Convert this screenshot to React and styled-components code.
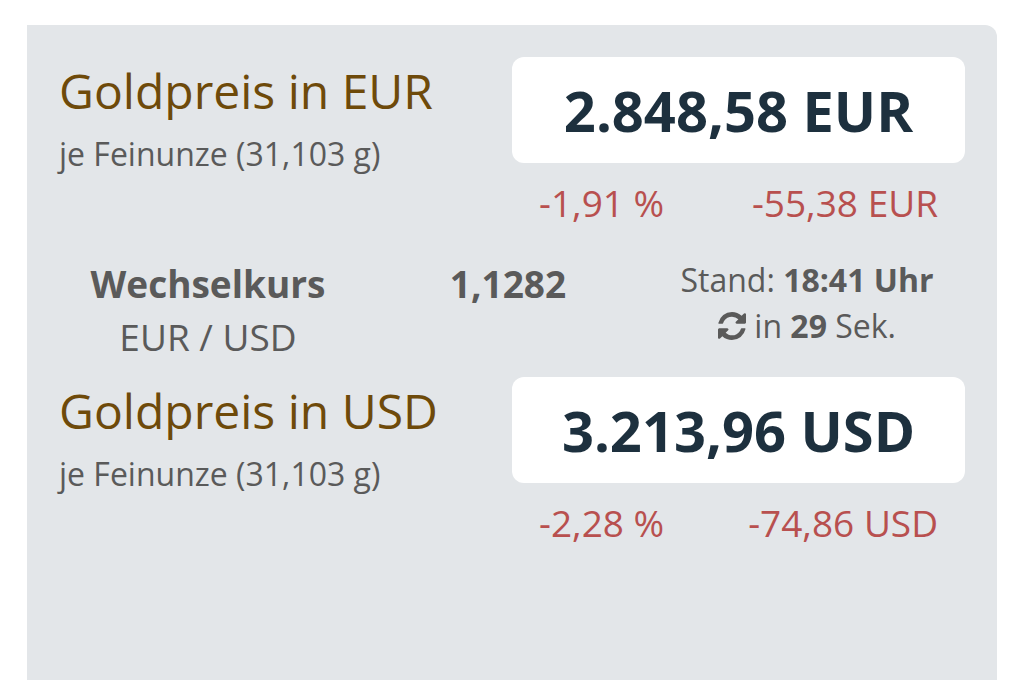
import React from "react";
import styled, { createGlobalStyle } from "styled-components";

const GlobalStyle = createGlobalStyle`
  * { box-sizing: border-box; }
  body {
    margin: 0;
    background: #fff;
    color: #5a5a5a;
    font-family: "Open Sans", "Noto Sans", sans-serif;
  }
`;

const Page = styled.main`
  padding: 25px 27px 0;
`;

const Panel = styled.section`
  min-height: calc(100vh - 25px);
  padding: 32px;
  background: #e3e6e9;
  border-radius: 0 12px 0 0;
`;

const PriceRow = styled.article`
  display: grid;
  grid-template-columns: 1fr 1fr;
`;

const Title = styled.h2`
  margin: 0;
  color: #6e4a0a;
  font-size: 48px;
  font-weight: 400;
  line-height: 68px;
`;

const Unit = styled.p`
  margin: 0;
  font-size: 32px;
  line-height: 58px;
`;

const Price = styled.p`
  margin: 0;
  background: #fff;
  border-radius: 12px;
  color: #1d303e;
  font-size: 56px;
  font-weight: 700;
  line-height: 106px;
  text-align: center;
`;

const Changes = styled.div`
  display: flex;
  justify-content: space-between;
  padding: 14px 27px 0;
  color: #b8504f;
  font-size: 37px;
  line-height: 52px;
`;

const RateRow = styled.section`
  display: grid;
  grid-template-columns: 298px 1fr 306px;
  padding: 28px 0 14px;
  text-align: center;
`;

const Rate = styled.p`
  margin: 0;
  font-size: 37px;
  line-height: 53px;
`;

const Status = styled.p`
  margin: 0;
  padding-right: 10px;
  font-size: 32px;
  line-height: 46px;
`;

const Refresh = styled.svg`
  width: 28px;
  height: 28px;
  fill: currentColor;
  vertical-align: -2px;
`;

const RefreshIcon = () => (
  <Refresh viewBox="128 128 1536 1536" aria-hidden="true">
    <path d="M1639 1056q0 5-1 7-64 268-268 434.500t-478 166.500q-146 0-282.500-55t-243.500-157l-129 129q-19 19-45 19t-45-19-19-45v-448q0-26 19-45t45-19h448q26 0 45 19t19 45-19 45l-137 137q71 66 161 102t187 36q134 0 250-65t186-179q11-17 53-117 8-23 30-23h192q13 0 22.500 9.500t9.500 22.500zm25-800v448q0 26-19 45t-45 19h-448q-26 0-45-19t-19-45 19-45l138-138q-148-137-349-137-134 0-250 65t-186 179q-11 17-53 117-8 23-30 23h-199q-13 0-22.500-9.500t-9.500-22.500v-7q65-268 270-434.500t480-166.500q146 0 284 55.500t245 156.500l130-129q19-19 45-19t45 19 19 45z" />
  </Refresh>
);

const Gold = ({ currency, price, percent, change }) => (
  <PriceRow>
    <div>
      <Title>Goldpreis in {currency}</Title>
      <Unit>je Feinunze (31,103 g)</Unit>
    </div>
    <div>
      <Price>{price} {currency}</Price>
      <Changes>
        <span>{percent} %</span>
        <span>{change} {currency}</span>
      </Changes>
    </div>
  </PriceRow>
);

export default function App() {
  return (
    <Page>
      <GlobalStyle />
      <Panel>
        <Gold currency="EUR" price="2.848,58" percent="-1,91" change="-55,38" />
        <RateRow>
          <Rate><b>Wechselkurs</b><br />EUR / USD</Rate>
          <Rate><b>1,1282</b></Rate>
          <Status>
            Stand: <b>18:41 Uhr</b><br />
            <RefreshIcon /> in <b>29</b> Sek.
          </Status>
        </RateRow>
        <Gold currency="USD" price="3.213,96" percent="-2,28" change="-74,86" />
      </Panel>
    </Page>
  );
}
